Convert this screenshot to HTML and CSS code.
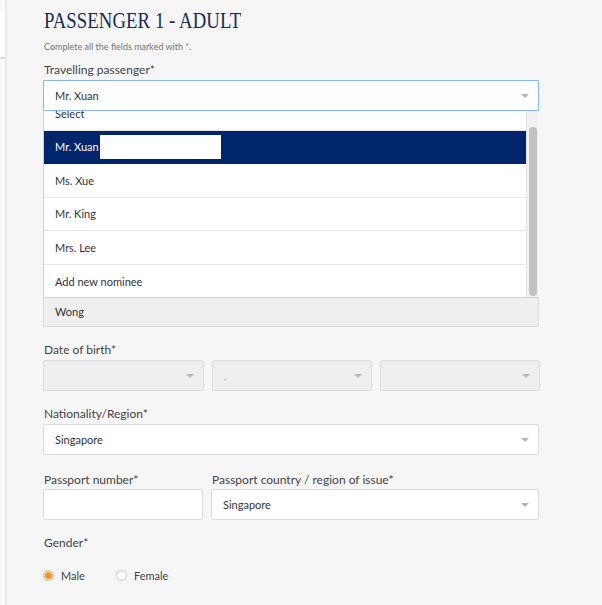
FILE: index.html
```html
<!DOCTYPE html>
<html lang="en">
<head>
<meta charset="utf-8">
<title>Passenger 1 - Adult</title>
<link rel="stylesheet" href="styles.css">
</head>
<body>
<div class="page">
  <aside class="rail"><div class="rail-top"></div></aside>
  <main class="form">
    <h1 class="title"><span class="title-text">PASSENGER 1 - ADULT</span></h1>
    <p class="hint">Complete all the fields marked with *.</p>

    <div class="field">
      <label class="label">Travelling passenger*</label>
      <div class="select-wrap">
        <div class="select focused"><span>Mr. Xuan</span><i class="arrow"></i></div>
        <div class="dropdown">
          <div class="viewport">
            <ul class="options">
              <li class="opt">Select</li>
              <li class="opt active">Mr. Xuan<span class="redact"></span></li>
              <li class="opt">Ms. Xue</li>
              <li class="opt">Mr. King</li>
              <li class="opt">Mrs. Lee</li>
              <li class="opt">Add new nominee</li>
            </ul>
          </div>
          <div class="scrollbar"><div class="thumb"></div></div>
        </div>
      </div>
    </div>

    <div class="field covered">
      <div class="input disabled">Wong</div>
    </div>

    <div class="field">
      <label class="label">Date of birth*</label>
      <div class="dob">
        <div class="select disabled"><span></span><i class="arrow"></i></div>
        <div class="select disabled"><span class="speck">.</span><i class="arrow"></i></div>
        <div class="select disabled"><span></span><i class="arrow"></i></div>
      </div>
    </div>

    <div class="field">
      <label class="label">Nationality/Region*</label>
      <div class="select"><span>Singapore</span><i class="arrow"></i></div>
    </div>

    <div class="passport field">
      <div class="col">
        <label class="label">Passport number*</label>
        <div class="input"></div>
      </div>
      <div class="col">
        <label class="label">Passport country / region of issue*</label>
        <div class="select"><span>Singapore</span><i class="arrow"></i></div>
      </div>
    </div>

    <div class="field">
      <label class="label">Gender*</label>
      <div class="radios">
        <span class="radio checked"></span><span class="radio-label">Male</span>
        <span class="radio"></span><span class="radio-label">Female</span>
      </div>
    </div>
  </main>
</div>
</body>
</html>
```

FILE: styles.css
```css
* { box-sizing: border-box; }
html, body { margin: 0; padding: 0; }
body {
  background: #f6f6f6;
  font-family: Lato, "Open Sans", Arial, sans-serif;
  color: #333;
  width: 602px;
  height: 605px;
  overflow: hidden;
}
.page { display: flex; min-height: 605px; }
.rail {
  width: 7px;
  flex: none;
  background: #f9f9f9;
  border-right: 2px solid #e9e9e9;
  padding-top: 10px;
}
.rail-top {
  height: 49px;
  background: #ffffff;
  border-bottom: 2px solid #d8d8d8;
}
.form {
  width: 532px;
  padding: 6px 0 0 36px;
}
.title {
  margin: 0;
  font-family: "Liberation Serif", "DejaVu Serif", serif;
  font-weight: normal;
  font-size: 24px;
  line-height: 28px;
  color: #1c2a5a;
  white-space: nowrap;
  padding-left: 1px;
}
.title-text {
  display: inline-block;
  transform: scaleX(0.78);
  transform-origin: left center;
  letter-spacing: 0.1px;
}
.hint {
  margin: 7px 0 0 1px;
  font-size: 9px;
  line-height: 12px;
  color: #777;
}
.field { margin-top: 16px; }
.hint + .field { margin-top: 10px; }
.label {
  display: block;
  font-size: 12px;
  line-height: 14px;
  color: #444;
  margin-bottom: 3px;
  padding-left: 1px;
  white-space: nowrap;
}
.select, .input {
  position: relative;
  height: 31px;
  background: #fff;
  border: 1px solid #dcdcdc;
  border-radius: 2px;
  display: flex;
  align-items: center;
  padding: 0 11px;
  font-size: 11px;
  color: #333;
}
.select.focused { border-color: #8ab4f8; border-radius: 1px; }
.select.disabled, .input.disabled { background: #efefef; }
.arrow {
  position: absolute;
  right: 9px;
  top: 50%;
  margin-top: -2px;
  width: 0; height: 0;
  border-left: 4px solid transparent;
  border-right: 4px solid transparent;
  border-top: 4px solid #b4b4b4;
}
.select-wrap { position: relative; }
.dropdown {
  position: absolute;
  left: 0;
  right: 1px;
  top: 100%;
  height: 187px;
  display: flex;
  background: #fff;
  border-left: 1px solid #cfcfcf;
  border-bottom: 1px solid #cfcfcf;
  z-index: 5;
}
.viewport { flex: 1; overflow: hidden; }
.options { list-style: none; margin: -14px 0 0 0; padding: 0; }
.opt {
  height: 33.5px;
  display: flex;
  align-items: center;
  padding-left: 11px;
  font-size: 11px;
  color: #333;
  border-bottom: 1px solid #e6e6e6;
}
.opt:last-child { border-bottom: none; }
.opt.active { background: #00256b; color: #fff; border-bottom-color: #00256b; }
.redact {
  display: inline-block;
  width: 121px;
  height: 24px;
  margin-left: 1px;
  background: #fff;
}
.scrollbar {
  width: 12px;
  flex: none;
  background: #f1f1f1;
  border-left: 1px solid #e4e4e4;
  padding: 16px 1px 0 2px;
}
.thumb {
  width: 8px;
  height: 169px;
  border-radius: 4px;
  background: #c2c2c2;
}
.field.covered { margin-top: 185px; }
.dob {
  display: grid;
  grid-template-columns: 161px 160px 160px;
  gap: 8px;
  width: 496px;
}
.speck { color: #d8a070; }
.passport {
  display: grid;
  grid-template-columns: 160px 328px;
  column-gap: 8px;
  margin-top: 18px;
}
.passport .label { margin-bottom: 2px; }
.radios {
  display: flex;
  align-items: center;
  margin-top: 15px;
  height: 20px;
  font-size: 11px;
  color: #444;
}
.radio {
  width: 11px;
  height: 11px;
  border-radius: 50%;
  border: 1px solid #c8c8c8;
  background: #fff;
  flex: none;
}
.radio.checked {
  background: #f7941d;
  box-shadow: inset 0 0 0 1px #fff;
  border-color: #c8c8c8;
}
.radio-label { margin-left: 7px; margin-right: 31px; }
```
